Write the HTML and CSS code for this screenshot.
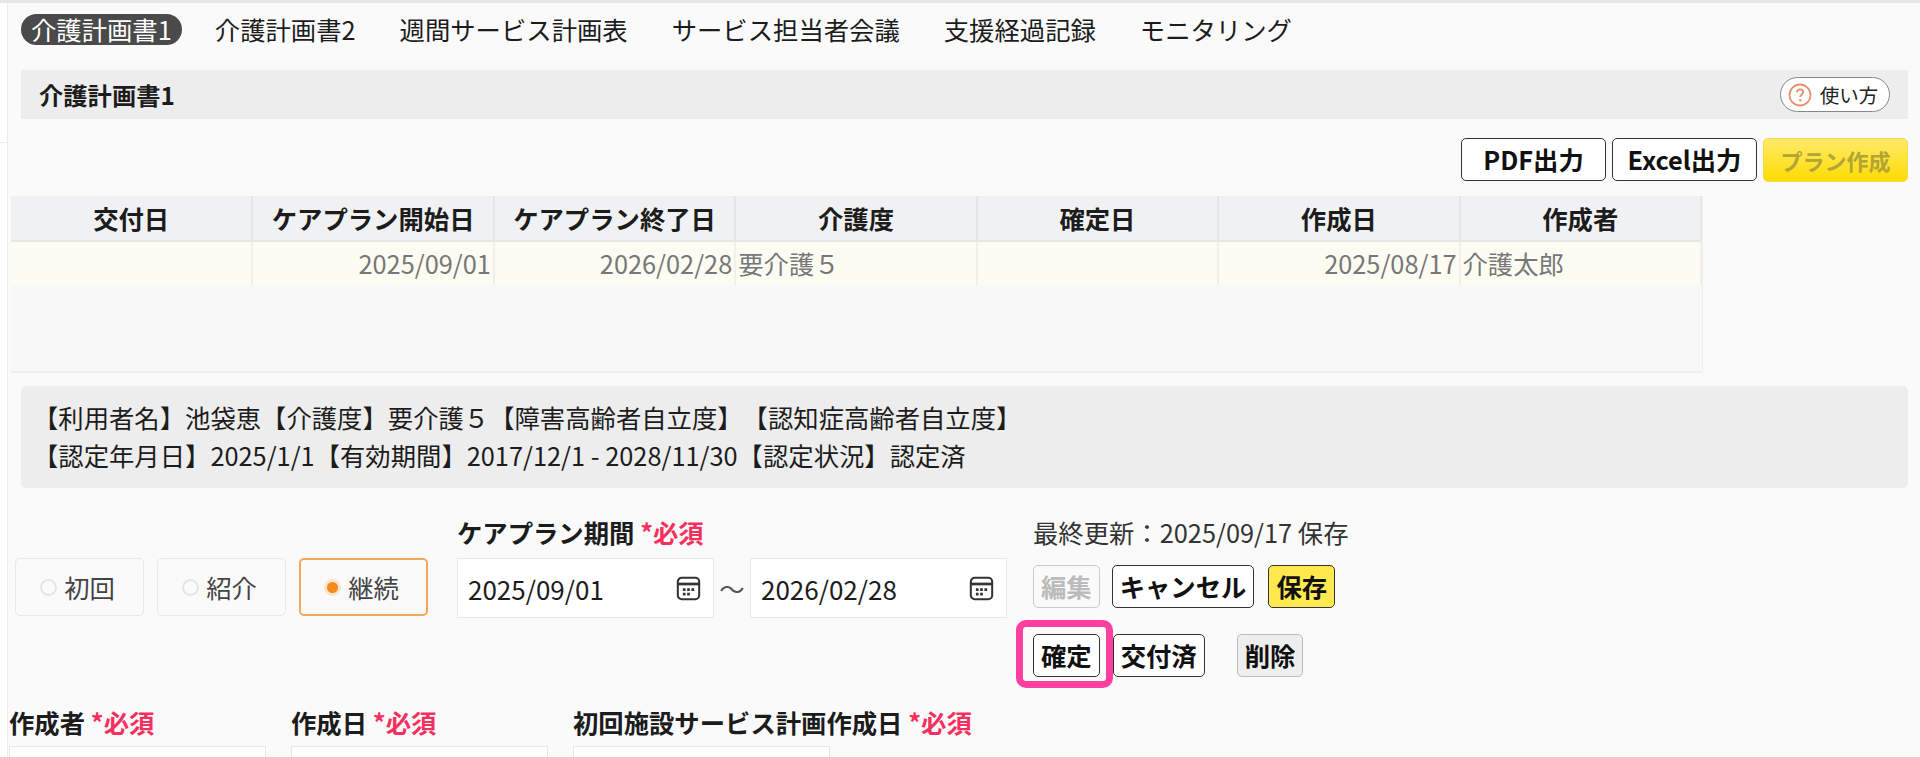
FILE: index.html
```html
<!DOCTYPE html>
<html lang="ja">
	<head>
		<meta charset="utf-8" />
		<title>介護計画書1</title>
		<link rel="stylesheet" href="styles.css">
	</head>
	<body>
		<div id="page" class="flex">
			<div id="side-strip">
				<div class="strip-top"></div>
			</div>
			<main id="content">
				<nav id="tabs" class="flex">
					<a class="tab active">介護計画書1</a>
					<a class="tab">介護計画書2</a>
					<a class="tab">週間サービス計画表</a>
					<a class="tab">サービス担当者会議</a>
					<a class="tab">支援経過記録</a>
					<a class="tab">モニタリング</a>
				</nav>
				<div id="title-bar" class="flex">
					<b>介護計画書1</b>
					<button type="button" id="help-btn" class="flex">
						<svg class="help-icon" viewBox="0 0 24 24">
							<circle cx="12" cy="12" r="10.500" fill="none" stroke="#e8906c" stroke-width="1.800"/>
							<path d="M8.900 9.400c.2-1.900 1.500-3 3.200-3 1.800 0 3.100 1.100 3.100 2.700 0 2.300-2.900 2.500-2.900 5" fill="none" stroke="#e8906c" stroke-width="1.900"/>
							<circle cx="12.300" cy="17.300" r="1.200" fill="#e8906c"/>
						</svg>
						<span>使い方</span>
					</button>
				</div>
				<div id="actions" class="flex">
					<button type="button" class="btn wide">PDF出力</button>
					<button type="button" class="btn wide">Excel出力</button>
					<button type="button" class="btn wide plan" disabled="">プラン作成</button>
				</div>
				<div id="plans">
					<table>
						<thead>
							<tr>
								<th>交付日</th>
								<th>ケアプラン開始日</th>
								<th>ケアプラン終了日</th>
								<th>介護度</th>
								<th>確定日</th>
								<th>作成日</th>
								<th>作成者</th>
							</tr>
						</thead>
						<tbody>
							<tr>
								<td></td>
								<td class="num">2025/09/01</td>
								<td class="num">2026/02/28</td>
								<td>要介護５</td>
								<td></td>
								<td class="num">2025/08/17</td>
								<td>介護太郎</td>
							</tr>
						</tbody>
					</table>
				</div>
				<div id="summary">
					<div>【利用者名】池袋恵【介護度】要介護５【障害高齢者自立度】【認知症高齢者自立度】</div>
					<div>【認定年月日】2025/1/1【有効期間】2017/12/1 - 2028/11/30【認定状況】認定済</div>
				</div>
				<div id="plan-form" class="flex">
					<div id="kinds" class="flex">
						<label class="kind"><i class="radio"></i>初回</label>
						<label class="kind"><i class="radio"></i>紹介</label>
						<label class="kind checked"><i class="radio"></i>継続</label>
					</div>
					<div id="period">
						<div class="field-label">ケアプラン期間 <em>*必須</em></div>
						<div class="flex period-row">
							<div class="date-input flex">
								<span>2025/09/01</span>
								<svg class="cal-icon" viewBox="0 0 24 24">
									<rect x="2.500" y="2.500" width="19" height="19" rx="3.500" fill="none" stroke="#333" stroke-width="1.800"/>
									<path d="M2.500 8h19" stroke="#333" stroke-width="2.400"/>
									<path d="M7 11.800h2.400v2.400H7zm3.800 0h2.400v2.400h-2.400zm3.800 0H17v2.400h-2.400zM7 15.800h2.400v2.400H7zm3.800 0h2.400v2.400h-2.400z" fill="#333"/>
								</svg>
							</div>
							<span class="tilde">～</span>
							<div class="date-input flex">
								<span>2026/02/28</span>
								<svg class="cal-icon" viewBox="0 0 24 24">
									<rect x="2.500" y="2.500" width="19" height="19" rx="3.500" fill="none" stroke="#333" stroke-width="1.800"/>
									<path d="M2.500 8h19" stroke="#333" stroke-width="2.400"/>
									<path d="M7 11.800h2.400v2.400H7zm3.800 0h2.400v2.400h-2.400zm3.800 0H17v2.400h-2.400zM7 15.800h2.400v2.400H7zm3.800 0h2.400v2.400h-2.400z" fill="#333"/>
								</svg>
							</div>
						</div>
					</div>
					<div id="status">
						<div class="updated">最終更新：2025/09/17 保存</div>
						<div class="flex btn-row">
							<button type="button" class="btn" disabled="">編集</button>
							<button type="button" class="btn">キャンセル</button>
							<button type="button" class="btn save">保存</button>
						</div>
						<div class="flex btn-row second">
							<button type="button" class="btn confirm">確定<span class="highlight"></span></button>
							<button type="button" class="btn">交付済</button>
							<button type="button" class="btn remove">削除</button>
						</div>
					</div>
				</div>
				<div id="dates" class="flex">
					<div class="date-field">
						<div class="field-label">作成者 <em>*必須</em></div>
						<div class="blank-input"></div>
					</div>
					<div class="date-field">
						<div class="field-label">作成日 <em>*必須</em></div>
						<div class="blank-input"></div>
					</div>
					<div class="date-field">
						<div class="field-label">初回施設サービス計画作成日 <em>*必須</em></div>
						<div class="blank-input"></div>
					</div>
				</div>
			</main>
		</div>
	</body>
</html>
```

FILE: styles.css
```css
html, body {
	margin: 0;
	height: 757px;
	overflow: hidden;
}

body {
	background-color: #fafafa;
	color: #1c1c1c;
	font-family: "Noto Sans CJK JP", "Noto Sans", sans-serif;
	font-size: 25.35px;
	text-spacing-trim: space-all;
}

button {
	font-family: inherit;
	cursor: pointer;
}

.flex {
	display: flex;
}

#page {
	height: 757px;
	border-top: 3px solid #e6e6e6;
	box-sizing: border-box;
}

#side-strip {
	flex: none;
	width: 8px;
	background-color: #fefefb;
	border-right: 1px solid #ececec;
	box-sizing: border-box;
}

.strip-top {
	height: 139px;
	background-color: #fff;
	border-bottom: 1px solid #ececec;
}

#content {
	flex: 1;
	min-width: 0;
	padding-right: 12px;
}

/* tabs */
#tabs {
	margin: 11px 0 0 13px;
	gap: 44px;
	height: 31px;
	align-items: center;
	line-height: 31px;
}

.tab.active {
	background-color: #4a4a4a;
	color: #fff;
	border-radius: 16px;
	padding: 0 10px;
	margin-right: -11px;
}

/* title */
#title-bar {
	margin: 25px 0 0 13px;
	height: 49px;
	padding: 0 18px;
	background-color: #ededed;
	align-items: center;
	justify-content: space-between;
	font-size: 24.3px;
}

#help-btn {
	height: 35px;
	width: 110px;
	padding: 0 4px 0 0;
	justify-content: center;
	align-items: center;
	gap: 8px;
	background-color: #fff;
	color: #222;
	border: 1px solid #888;
	border-radius: 18px;
	font-size: 19.5px;
}

.help-icon {
	width: 24px;
	height: 24px;
}

/* buttons */
#actions {
	justify-content: flex-end;
	gap: 6px;
	margin-top: 19px;
}

.btn {
	height: 43px;
	padding: 0 7px;
	background-color: #fff;
	color: #111;
	border: 1px solid #333;
	border-radius: 5px;
	font-size: 25.35px;
	font-weight: 700;
	line-height: 1;
	white-space: nowrap;
}

.btn.wide {
	width: 145px;
	padding: 0;
}

.btn.plan {
	height: 44px;
	background: linear-gradient(#ffea6b, #fddc00);
	border-color: #f3d94c;
	color: #b3a437;
	font-size: 22px;
	cursor: not-allowed;
}

.btn:disabled:not(.plan) {
	border-color: #ccc;
	color: #bbb;
	background-color: #fafafa;
}

.btn.save {
	background-color: #ffe94f;
	margin-left: 2px;
}

.btn.remove {
	background-color: #eee;
	border-color: #bbb;
	margin-left: 19px;
}

.btn.confirm {
	position: relative;
}

.highlight {
	position: absolute;
	left: -18px;
	top: -15px;
	width: 97px;
	height: 68px;
	box-sizing: border-box;
	border: 7px solid #fd3fa0;
	border-radius: 10px;
}

/* table */
#plans {
	margin: 14px 0 0 3px;
	width: 1691px;
	height: 175px;
	background-color: #f8f8f8;
	border-bottom: 2px solid #eee;
	border-right: 1px solid #eee;
}

table {
	width: 100%;
	table-layout: fixed;
	border-collapse: collapse;
}

th {
	height: 44px;
	padding: 0;
	background-color: #f0f1f2;
	border-right: 2px solid #e6e6e6;
	border-bottom: 2px solid #e6e6e6;
	font-weight: 700;
}

td {
	height: 43px;
	padding: 0 2px;
	background-color: #fdfcf3;
	border-right: 2px solid #f1f1ea;
	color: #777;
	line-height: 1;
}

td.num {
	text-align: right;
}

/* summary */
#summary {
	margin: 13px 0 0 13px;
	height: 102px;
	padding: 12px 12px 0;
	box-sizing: border-box;
	background-color: #ededed;
	border-radius: 5px;
	line-height: 38px;
}

/* form */
#plan-form {
	height: 190px;
	margin-top: 27px;
}

#kinds {
	margin: 43px 0 0 7px;
	gap: 13px;
	height: 58px;
}

.kind {
	display: flex;
	width: 129px;
	height: 58px;
	padding-right: 4px;
	box-sizing: border-box;
	align-items: center;
	justify-content: center;
	gap: 7px;
	background-color: #fafafa;
	border: 1px solid #e8e8e8;
	border-radius: 5px;
	color: #444;
}

.radio {
	width: 17px;
	height: 17px;
	box-sizing: border-box;
	border: 2px solid #e5e5e5;
	border-radius: 50%;
	background-color: #fafafa;
}

.kind.checked {
	border: 2px solid #f3a85c;
}

.kind.checked .radio {
	background-color: #f58a1f;
	box-shadow: 0 0 0 3px #fbe3cc;
	border: 0;
	width: 11px;
	height: 11px;
	margin: 0 3px;
}

#period {
	margin-left: 29px;
}

.field-label {
	font-weight: 700;
	line-height: 34px;
	white-space: nowrap;
}

em {
	font-style: normal;
	color: #f5305f;
}

.period-row {
	margin-top: 9px;
	align-items: center;
}

.date-input {
	width: 257px;
	height: 60px;
	box-sizing: border-box;
	padding: 0 11px 0 10px;
	align-items: center;
	justify-content: space-between;
	background-color: #fff;
	border: 1px solid #e8e8e8;
	font-size: 26px;
}

.cal-icon {
	width: 27px;
	height: 27px;
}

.tilde {
	width: 36px;
	text-align: center;
	color: #555;
}

#status {
	margin-left: 26px;
}

.updated {
	line-height: 34px;
	color: #333;
}

.btn-row {
	margin-top: 16px;
	gap: 12px;
}

.btn-row.second {
	margin-top: 26px;
	gap: 13px;
}

/* dates */
#dates {
	margin: 0 0 0 1px;
	gap: 25px;
}

.date-field {
	width: 257px;
}

.blank-input {
	margin-top: 7px;
	height: 60px;
	background-color: #fff;
	border: 1px solid #e8e8e8;
	box-sizing: border-box;
}
```
